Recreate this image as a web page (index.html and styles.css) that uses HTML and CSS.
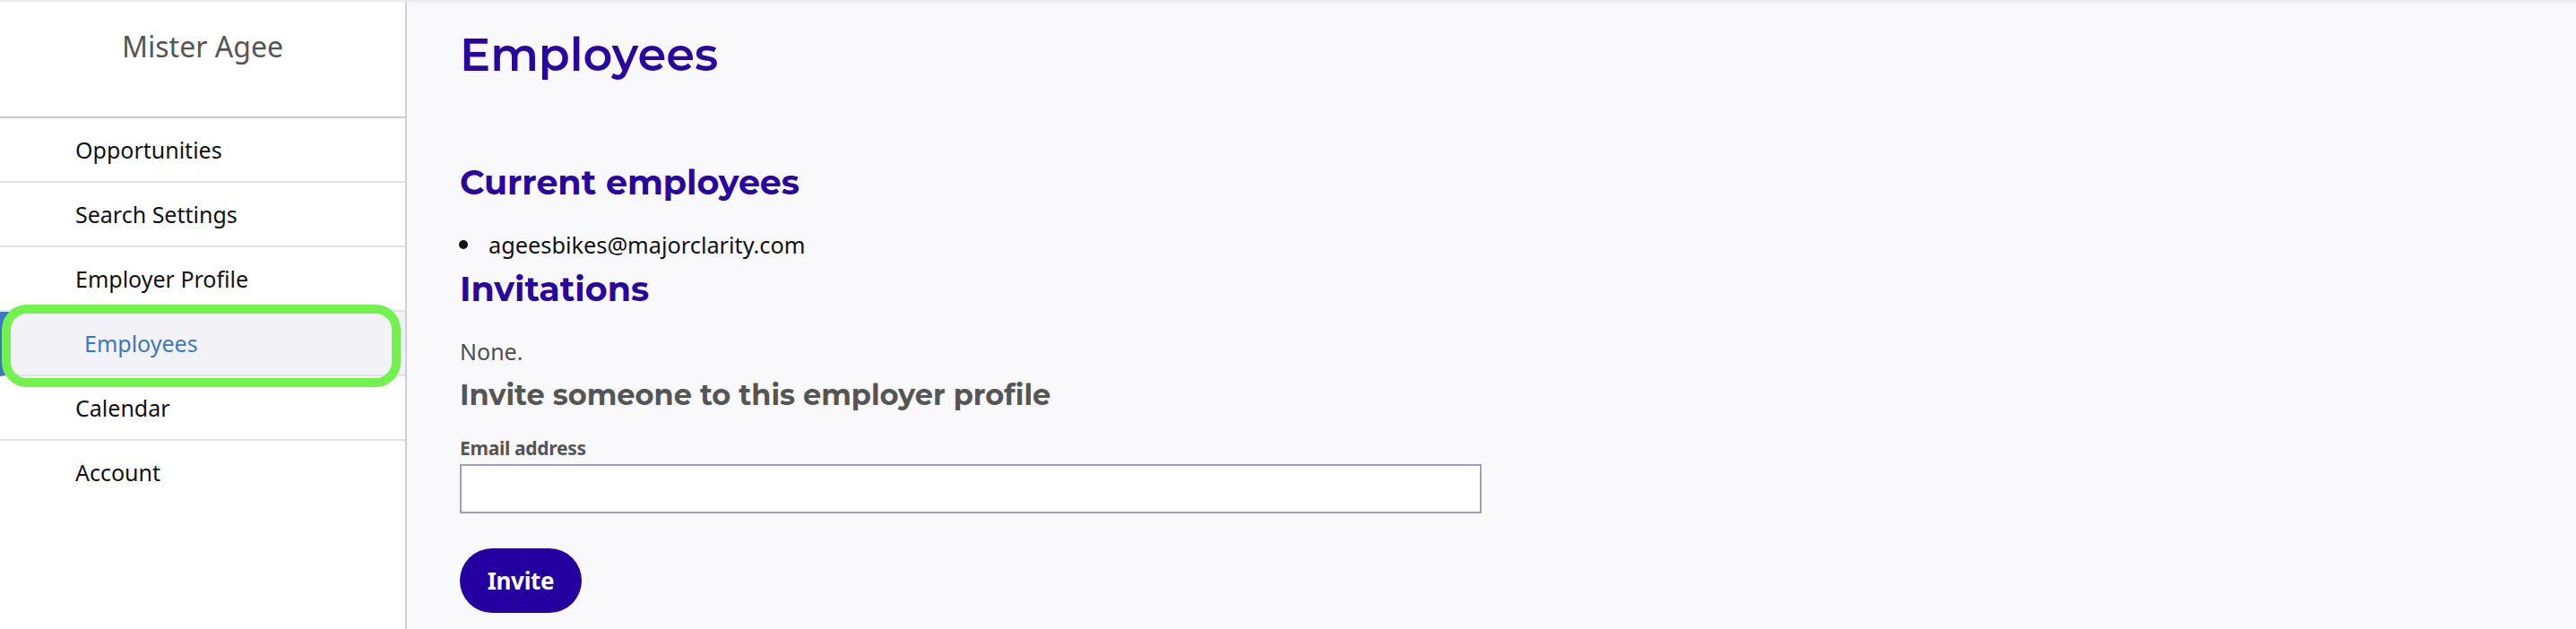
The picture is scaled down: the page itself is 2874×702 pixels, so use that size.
FILE: index.html
```html
<!DOCTYPE html>
<html lang="en">
<head>
<meta charset="utf-8">
<title>Employees</title>
<link rel="stylesheet" href="styles.css">
</head>
<body>
<div class="topshade"></div>
<div class="app">
  <aside class="sidebar">
    <div class="brand">Mister Agee</div>
    <nav class="nav">
      <a class="nav-item">Opportunities</a>
      <a class="nav-item">Search Settings</a>
      <a class="nav-item">Employer Profile</a>
      <a class="nav-item active">Employees<span class="highlight"></span></a>
      <a class="nav-item">Calendar</a>
      <a class="nav-item last">Account</a>
    </nav>
  </aside>
  <main class="main">
    <h1 class="title">Employees</h1>
    <h2 class="section">Current employees</h2>
    <ul class="list">
      <li class="list-item">ageesbikes@majorclarity.com</li>
    </ul>
    <h2 class="section section-inv">Invitations</h2>
    <p class="none">None.</p>
    <h3 class="subtitle">Invite someone to this employer profile</h3>
    <form class="form">
      <label class="label" for="email">Email address</label>
      <input class="input" id="email" type="text">
      <button class="button" type="button">Invite</button>
    </form>
  </main>
</div>
</body>
</html>
```
FILE: styles.css
```css
* { box-sizing: border-box; }
html, body { margin: 0; padding: 0; }
body {
  font-family: "Noto Sans", "Open Sans", sans-serif;
  background: #f9f9fb;
  color: #111;
}
.topshade {
  position: fixed;
  top: 0; left: 0; right: 0;
  height: 4px;
  background: linear-gradient(#e6e6ea, rgba(230,230,234,0));
  pointer-events: none;
  z-index: 5;
}
.app {
  display: flex;
  min-height: 100vh;
}
.sidebar {
  width: 454px;
  flex: none;
  background: #fff;
  border-right: 2px solid #cfcee2;
}
.brand {
  height: 132px;
  padding-top: 32px;
  border-bottom: 2px solid #c9c8dc;
  text-align: center;
  font-size: 32px;
  line-height: 40px;
  color: #555;
}
.nav { display: flex; flex-direction: column; }
.nav-item {
  position: relative;
  display: block;
  height: 72px;
  padding-left: 84px;
  border-bottom: 2px solid #e1e0eb;
  font-size: 25px;
  line-height: 70px;
  color: #111;
}
.nav-item.last { border-bottom: none; }
.nav-item.active {
  background: #f2f2f7;
  color: #3a78c5;
  border-left: 10px solid #3a78c5;
}
.highlight {
  position: absolute;
  top: -8px;
  left: -8px;
  width: 445px;
  height: 92px;
  border: 10px solid #72f24c;
  border-radius: 28px;
  pointer-events: none;
}
.main {
  flex: 1;
  padding-left: 59px;
}
.title {
  margin: 29px 0 0;
  font-family: Montserrat, Inter, sans-serif;
  font-weight: 600;
  font-size: 51px;
  line-height: 64px;
  color: #2a059f;
}
.section {
  margin: 87px 0 0;
  font-family: Montserrat, Inter, sans-serif;
  font-weight: 700;
  font-size: 38px;
  line-height: 48px;
  color: #2a059f;
}
.section-inv { margin-top: 9px; }
.list {
  list-style: none;
  margin: 28px 0 0;
  padding: 0;
}
.list-item {
  display: flex;
  align-items: center;
  font-size: 25.3px;
  line-height: 34px;
  color: #111;
}
.list-item::before {
  content: "";
  width: 10px;
  height: 10px;
  border-radius: 50%;
  background: #111;
  margin-left: -1px;
  margin-right: 23px;
}
.none {
  margin: 28px 0 0;
  font-size: 25px;
  line-height: 34px;
  color: #4d4d4d;
}
.subtitle {
  margin: 13px 0 0;
  font-family: Montserrat, Inter, sans-serif;
  font-weight: 700;
  font-size: 32px;
  line-height: 38px;
  color: #555;
}
.form {
  display: flex;
  flex-direction: column;
  align-items: flex-start;
  margin-top: 26px;
}
.label {
  font-weight: 700;
  font-size: 21px;
  line-height: 28px;
  color: #555;
  letter-spacing: -0.3px;
}
.input {
  margin-top: 4px;
  width: 1140px;
  height: 55px;
  border: 2px solid #a09cc3;
  background: #fff;
  border-radius: 0;
  outline: none;
}
.button {
  margin-top: 39px;
  width: 136px;
  height: 72px;
  border: none;
  border-radius: 36px;
  background: #2400a0;
  color: #fff;
  font-family: "Noto Sans", "Open Sans", sans-serif;
  font-weight: 700;
  font-size: 26px;
  letter-spacing: -0.3px;
  padding: 0;
}
```
